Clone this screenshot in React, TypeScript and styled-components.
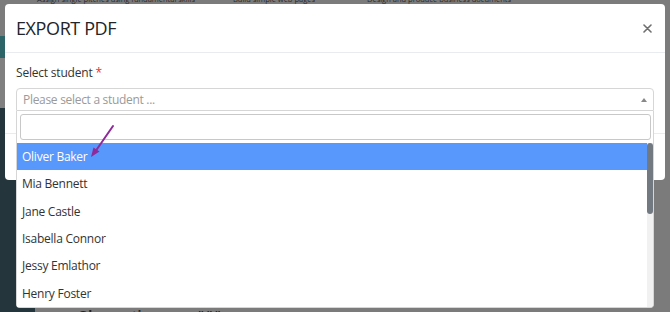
import React from 'react';
import styled, { createGlobalStyle } from 'styled-components';

const Global = createGlobalStyle`
  html, body { margin: 0; padding: 0; width: 670px; height: 312px; overflow: hidden; }
  body { font-family: "Open Sans", "Noto Sans", sans-serif; }
  * { box-sizing: border-box; }
`;

const Page = styled.div`
  position: relative;
  width: 670px;
  height: 312px;
  overflow: hidden;
  display: flex;
  background: #7b7b7b;
`;

const Sidebar = styled.div`
  width: 35px;
  display: flex;
  flex-direction: column;
`;

const SideSeg = styled.div<{ $h?: number; $c: string }>`
  height: ${(p) => (p.$h ? `${p.$h}px` : 'auto')};
  flex: ${(p) => (p.$h ? '0 0 auto' : '1')};
  background: ${(p) => p.$c};
`;

const Main = styled.div`
  flex: 1;
  display: flex;
  flex-direction: column;
  justify-content: space-between;
`;

const TopRow = styled.div`
  display: grid;
  grid-template-columns: 196px 134px auto;
  margin-top: -6px;
  padding-left: 2px;
  font-size: 7.5px;
  line-height: 11px;
  color: #2a2a2a;
  white-space: nowrap;
  overflow: hidden;
`;

const BottomRow = styled.div`
  display: flex;
  gap: 38px;
  margin-bottom: -12px;
  padding-left: 43px;
  font-size: 13px;
  line-height: 18px;
  color: #222;
  font-weight: 700;
`;

const Overlay = styled.div`
  position: absolute;
  inset: 0;
  padding: 4px 5px;
`;

const Modal = styled.div`
  width: 660px;
  height: 176px;
  background: #fff;
  border-radius: 4px;
  display: flex;
  flex-direction: column;
`;

const Header = styled.div`
  height: 49px;
  border-bottom: 1px solid #e9ecef;
  display: flex;
  align-items: center;
  justify-content: space-between;
  padding: 0 13px 0 11px;
`;

const Title = styled.h5`
  margin: 0;
  font-size: 18px;
  font-weight: 400;
  color: #212529;
  letter-spacing: -0.4px;
`;

const Close = styled.button`
  border: 0;
  background: none;
  padding: 0;
  width: 9px;
  height: 9px;
  display: flex;
  cursor: pointer;
`;

const Body = styled.div`
  height: 80px;
  padding: 11px 11px 0 11px;
`;

const Label = styled.div`
  font-size: 12px;
  letter-spacing: -0.2px;
  line-height: 18px;
  color: #333;
  margin-bottom: 6px;
`;

const Req = styled.span`
  color: #e3342f;
`;

const SelectWrap = styled.div`
  position: relative;
`;

const SelectBox = styled.div`
  height: 23px;
  border: 1px solid #d6d6d6;
  border-radius: 4px 4px 0 0;
  display: flex;
  align-items: center;
  justify-content: space-between;
  padding: 0 6px 0 6px;
  font-size: 12px;
  letter-spacing: -0.3px;
  color: #9a9a9a;
`;

const Caret = styled.span`
  width: 0;
  height: 0;
  border-style: solid;
  border-width: 0 3.5px 4px 3.5px;
  border-color: transparent transparent #888 transparent;
`;

const Dropdown = styled.div`
  position: absolute;
  top: 100%;
  left: 0;
  right: 0;
  background: #fff;
  border: 1px solid #d6d6d6;
  border-top: none;
  border-radius: 0 0 4px 4px;
  z-index: 5;
`;

const SearchWrap = styled.div`
  padding: 3px 2px 3px 3px;
`;

const Search = styled.input`
  display: block;
  width: 100%;
  height: 26px;
  border: 1px solid #c8c8c8;
  border-radius: 3px;
  outline: none;
`;

const ResultsArea = styled.div`
  display: flex;
  height: 164px;
`;

const Results = styled.ul`
  flex: 1;
  list-style: none;
  margin: 0;
  padding: 0;
  overflow: hidden;
`;

const ScrollTrack = styled.div`
  width: 6px;
  background: #f1f1f1;
  border-radius: 0 0 3px 0;
`;

const ScrollThumb = styled.div`
  height: 71px;
  background: #737980;
  border-radius: 3px;
`;

const Option = styled.li<{ $active?: boolean }>`
  height: 27.33px;
  display: flex;
  align-items: center;
  padding: 0 5px;
  font-size: 12px;
  letter-spacing: -0.25px;
  color: ${(p) => (p.$active ? '#fff' : '#333')};
  background: ${(p) => (p.$active ? '#5897fb' : '#fff')};
`;

const Footer = styled.div`
  flex: 1;
  border-top: 1px solid #e9ecef;
`;

const Annotation = styled.svg`
  position: absolute;
  left: 0;
  top: 0;
  pointer-events: none;
  z-index: 10;
`;

const students = [
  'Oliver Baker',
  'Mia Bennett',
  'Jane Castle',
  'Isabella Connor',
  'Jessy Emlathor',
  'Henry Foster',
  'Lucas Green',
  'Emma Harris',
  'Noah Jenkins',
  'Sophia King',
  'Liam Lewis',
  'Ava Morgan',
  'Ethan Parker',
  'Chloe Reed',
];

export default function App() {
  return (
    <>
      <Global />
      <Page>
        <Sidebar>
          <SideSeg $h={36} $c="#7b7b7b" />
          <SideSeg $h={22} $c="#2d6467" />
          <SideSeg $h={50} $c="#808080" />
          <SideSeg $c="#24353b" />
        </Sidebar>
        <Main>
          <TopRow>
            <span>Assign single pitches using fundamental skills</span>
            <span>Build simple web pages</span>
            <span>Design and produce business documents</span>
          </TopRow>
          <BottomRow>
            <span>Observation</span>
            <span>###</span>
          </BottomRow>
        </Main>
        <Overlay>
          <Modal>
            <Header>
              <Title>EXPORT PDF</Title>
              <Close aria-label="Close">
                <svg width="9" height="9" viewBox="0 0 9 9">
                  <path d="M1 1L8 8M8 1L1 8" stroke="#6f6f6f" strokeWidth="1.6" strokeLinecap="round" />
                </svg>
              </Close>
            </Header>
            <Body>
              <Label>
                Select student <Req>*</Req>
              </Label>
              <SelectWrap>
                <SelectBox>
                  <span>Please select a student ...</span>
                  <Caret />
                </SelectBox>
                <Dropdown>
                  <SearchWrap>
                    <Search />
                  </SearchWrap>
                  <ResultsArea>
                    <Results>
                      {students.map((s, i) => (
                        <Option key={s} $active={i === 0}>
                          {s}
                        </Option>
                      ))}
                    </Results>
                    <ScrollTrack>
                      <ScrollThumb />
                    </ScrollTrack>
                  </ResultsArea>
                </Dropdown>
              </SelectWrap>
            </Body>
            <Footer />
          </Modal>
        </Overlay>
        <Annotation width="670" height="312" viewBox="0 0 670 312">
          <path d="M113 126L95 152" stroke="#8e2a9a" strokeWidth="2" strokeLinecap="round" />
          <path d="M91 157L93.5 147.5L99.5 151.5Z" fill="#8e2a9a" />
        </Annotation>
      </Page>
    </>
  );
}
